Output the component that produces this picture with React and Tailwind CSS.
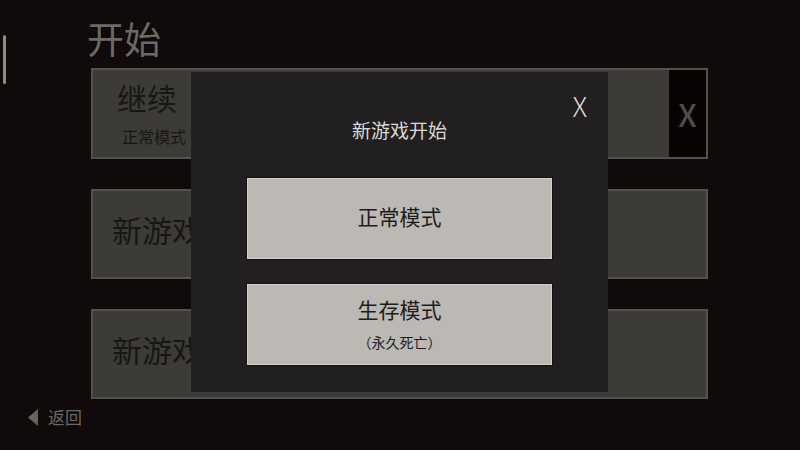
import React from "react";

const cjk = "font-['Noto_Sans_CJK_SC','Noto_Sans',sans-serif]";

function SlotCard({ title }) {
  return (
    <div className="h-[90px] border-2 border-[#53524e] bg-[#3c3b38]">
      <div className="pl-[19px] pt-[20px] text-[30px] leading-[36px] text-[#171615]">
        {title}
      </div>
    </div>
  );
}

export default function App() {
  return (
    <div className={`relative w-[800px] h-[450px] overflow-hidden bg-[#100a0a] ${cjk}`}>
      {/* scroll thumb */}
      <div className="absolute left-[3px] top-[35px] w-[3px] h-[49px] rounded-sm bg-[#8d8c87]" />

      <div className="flex flex-col">
        <div className="h-[68px] pl-[87px] pt-[15px] text-[37px] leading-[46px] text-[#6c6a65]">
          开始
        </div>

        <div className="ml-[91px] w-[617px] flex flex-col gap-[30px]">
          {/* continue */}
          <div className="h-[91px] flex border-2 border-[#53524e] bg-[#3c3b38]">
            <div className="flex-1 text-[#171615]">
              <div className="pl-[24px] pt-[9px] text-[30px] leading-[36px]">继续</div>
              <div className="pl-[29px] mt-[11px] text-[16px] leading-[20px]">正常模式</div>
            </div>
            <div className="w-[37px] bg-[#080303] flex items-center justify-center">
              <span className="text-[31px] leading-none font-medium text-[#4d4c48]">X</span>
            </div>
          </div>
          <SlotCard title="新游戏 1" />
          <SlotCard title="新游戏 2" />
        </div>

        <div className="mt-[6px] pl-[28px] h-[24px] flex items-center gap-[10px] text-[#6a6863]">
          <svg width="10" height="17" viewBox="0 0 10 17">
            <polygon points="10,0 10,17 0,8.5" fill="#66645f" />
          </svg>
          <span className="text-[17px] leading-[24px]">返回</span>
        </div>
      </div>

      {/* dialog */}
      <div className="absolute left-[191px] top-[72px] w-[417px] h-[320px] bg-[#221f20] flex flex-col items-center">
        <div className="w-full h-[48px] pt-[20px] pr-[21px] flex justify-end">
          <span className="text-[27px] leading-[28px] font-light text-[#dedbd5]">X</span>
        </div>
        <div className="text-[19px] leading-[20px] text-[#dcd9d3]">新游戏开始</div>

        <button className="mt-[38px] w-[305px] h-[81px] bg-[#bcb9b4] border border-[#d4d1cc] shadow-[0_0_0_1px_#111] flex flex-col items-center justify-center pb-[6px] text-[#1d1b1b]">
          <span className="text-[21px] leading-[28px]">正常模式</span>
        </button>

        <button className="mt-[25px] w-[305px] h-[81px] bg-[#bcb9b4] border border-[#d4d1cc] shadow-[0_0_0_1px_#111] flex flex-col items-center pt-[10px] text-[#1d1b1b]">
          <span className="text-[21px] leading-[28px]">生存模式</span>
          <span className="mt-[9px] text-[14px] leading-[20px]">（永久死亡）</span>
        </button>
      </div>
    </div>
  );
}
